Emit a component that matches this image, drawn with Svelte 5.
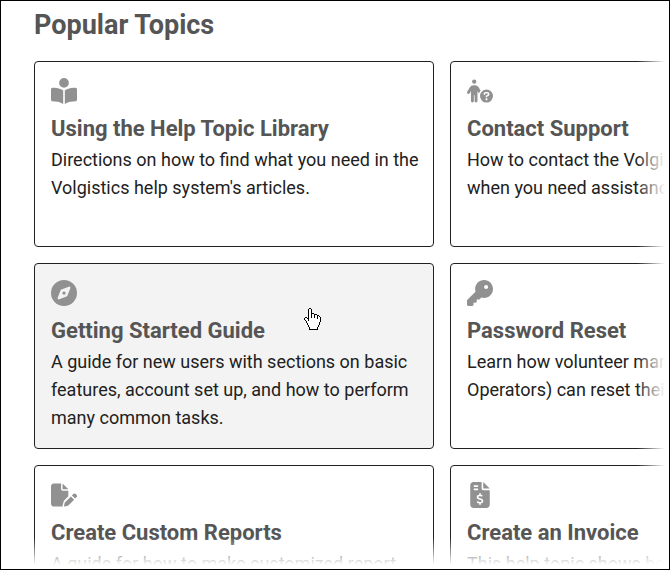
<script lang="ts">
	interface Topic {
		title: string;
		text: string;
		viewBox: string;
		icon: string;
		active?: boolean;
	}

	const topics: Topic[] = [
		{
			title: 'Using the Help Topic Library',
			text: "Directions on how to find what you need in the Volgistics help system's articles.",
			viewBox: '0 0 512 512',
			icon: 'M160 96a96 96 0 1 1 192 0A96 96 0 1 1 160 96zm80 152V512l-48.4-24.2c-20.9-10.4-43.5-17-66.8-19.3l-96-9.6C12.5 457.2 0 443.5 0 427V224c0-17.7 14.3-32 32-32H62.3c63.6 0 125.6 19.6 177.7 56zm32 264V248c52.1-36.4 114.1-56 177.7-56H480c17.7 0 32 14.3 32 32V427c0 16.4-12.5 30.2-28.8 31.8l-96 9.6c-23.2 2.3-45.9 8.9-66.8 19.3L272 512z'
		},
		{
			title: 'Contact Support',
			text: 'How to contact the Volgistics support team when you need assistance.',
			viewBox: '0 0 576 512',
			icon: 'M112 48a48 48 0 1 1 96 0 48 48 0 1 1 -96 0zm40 304V480c0 17.7-14.3 32-32 32s-32-14.3-32-32V256.9L59.4 304.5c-9.1 15.1-28.8 20-43.9 10.9s-20-28.8-10.9-43.9l58.3-97c17.4-28.9 48.6-46.6 82.3-46.6h29.7c33.7 0 64.9 17.7 82.3 46.6l44.9 74.7c-16.1 17.6-28.6 38.5-36.6 61.5c-1.9-1.8-3.5-3.9-4.9-6.3L232 256.9V480c0 17.7-14.3 32-32 32s-32-14.3-32-32V352H152zM432 224a144 144 0 1 1 0 288 144 144 0 1 1 0-288zm0 240a24 24 0 1 0 0-48 24 24 0 1 0 0 48zM368 321.6V328c0 8.8 7.2 16 16 16s16-7.2 16-16v-6.4c0-5.3 4.3-9.6 9.6-9.6h40.5c7.7 0 13.9 6.2 13.9 13.9c0 5.2-2.9 9.9-7.4 12.3l-32 16.8c-5.3 2.8-8.6 8.2-8.6 14.2V384c0 8.8 7.2 16 16 16s16-7.2 16-16v-5.1l23.5-12.3c15.1-7.9 24.5-23.6 24.5-40.6c0-25.4-20.6-45.9-45.9-45.9H409.6c-23 0-41.6 18.6-41.6 41.6z'
		},
		{
			title: 'Getting Started Guide',
			text: 'A guide for new users with sections on basic features, account set up, and how to perform many common tasks.',
			viewBox: '0 0 512 512',
			icon: 'M256 512A256 256 0 1 0 256 0a256 256 0 1 0 0 512zm50.7-186.9L162.4 380.6c-19.4 7.5-38.5-11.6-31-31l55.5-144.3c3.3-8.5 9.9-15.1 18.4-18.4l144.3-55.5c19.4-7.5 38.5 11.6 31 31L325.1 306.7c-3.2 8.5-9.9 15.1-18.4 18.4zM288 256a32 32 0 1 0 -64 0 32 32 0 1 0 64 0z',
			active: true
		},
		{
			title: 'Password Reset',
			text: 'Learn how volunteer managers (System Operators) can reset their password.',
			viewBox: '0 0 512 512',
			icon: 'M336 352c97.2 0 176-78.8 176-176S433.2 0 336 0S160 78.8 160 176c0 18.7 2.9 36.8 8.3 53.7L7 391c-4.5 4.5-7 10.6-7 17v80c0 13.3 10.7 24 24 24h80c13.3 0 24-10.7 24-24V448h40c13.3 0 24-10.7 24-24V384h40c6.4 0 12.5-2.5 17-7l33.3-33.3c16.9 5.4 35 8.3 53.7 8.3zM376 96a40 40 0 1 1 0 80 40 40 0 1 1 0-80z'
		},
		{
			title: 'Create Custom Reports',
			text: 'A guide for how to make customized report templates.',
			viewBox: '0 0 576 512',
			icon: 'M0 64C0 28.7 28.7 0 64 0H224V128c0 17.7 14.3 32 32 32H384V285.7l-86.8 86.8c-10.3 10.3-17.5 23.1-21 37.2l-18.7 74.9c-2.3 9.2-1.8 18.8 1.3 27.5H64c-35.3 0-64-28.7-64-64V64zm384 64H256V0L384 128zM549.8 235.7l14.4 14.4c15.6 15.6 15.6 40.9 0 56.6l-29.4 29.4-71-71 29.4-29.4c15.6-15.6 40.9-15.6 56.6 0zM311.9 417L441.1 287.8l71 71L382.9 487.9c-4.1 4.1-9.2 7-14.9 8.4l-60.1 15c-5.5 1.4-11.2-.2-15.2-4.2s-5.6-9.7-4.2-15.2l15-60.1c1.4-5.6 4.3-10.8 8.4-14.9z'
		},
		{
			title: 'Create an Invoice',
			text: 'This help topic shows how to create an invoice.',
			viewBox: '0 0 384 512',
			icon: 'M64 0C28.7 0 0 28.7 0 64V448c0 35.3 28.7 64 64 64H320c35.3 0 64-28.7 64-64V160H256c-17.7 0-32-14.3-32-32V0H64zM256 0V128H384L256 0zM64 80c0-8.8 7.2-16 16-16h64c8.8 0 16 7.2 16 16s-7.2 16-16 16H80c-8.8 0-16-7.2-16-16zm0 64c0-8.8 7.2-16 16-16h64c8.8 0 16 7.2 16 16s-7.2 16-16 16H80c-8.8 0-16-7.2-16-16zm128 72c8.8 0 16 7.2 16 16v17.3c8.5 1.2 16.7 3.1 24.1 5.1c8.5 2.3 13.6 11 11.3 19.6s-11 13.6-19.6 11.3c-11.1-3-22-5.2-32.1-5.3c-8.4-.1-17.4 1.8-23.6 5.5c-5.7 3.4-8.1 7.3-8.1 12.8c0 3.7 1.3 6.5 7.3 10.1c6.9 4.1 16.6 7.1 29.2 10.9l.5 .1c11.3 3.4 25.3 7.6 36.3 14.6c12.1 7.6 22.4 19.7 22.7 38.2c.3 19.3-9.6 33.3-22.9 41.6c-7.7 4.8-16.4 7.6-25.1 9.1V440c0 8.8-7.2 16-16 16s-16-7.2-16-16V422.2c-11.2-2.1-21.7-5.7-30.9-8.9c-2.1-.7-4.2-1.4-6.2-2.1c-8.4-2.8-12.9-11.9-10.1-20.2s11.9-12.9 20.2-10.1c2.5 .8 4.8 1.6 7.1 2.4c13.6 4.6 24.6 8.4 36.3 8.7c9.1 .3 17.9-1.7 23.7-5.3c5.1-3.2 7.9-7.3 7.8-14c-.1-4.6-1.8-7.8-7.7-11.6c-6.8-4.3-16.5-7.4-29-11.2l-1.6-.5c-11-3.3-24.3-7.3-34.8-13.7c-12-7.2-22.6-18.9-22.7-37.3c-.1-19.4 10.8-32.8 23.8-40.5c7.5-4.4 15.8-7.2 24.1-8.7V232c0-8.8 7.2-16 16-16z'
		}
	];
</script>

<main class="page">
	<h1>Popular Topics</h1>
	<div class="topics">
		{#each topics as topic}
			<a class="card" class:active={topic.active} href="#topic">
				<svg class="icon" viewBox={topic.viewBox} aria-hidden="true">
					<path d={topic.icon} />
				</svg>
				<h2>{topic.title}</h2>
				<p>{topic.text}</p>
				{#if topic.active}
					<svg class="pointer" viewBox="0 0 17 22" shape-rendering="crispEdges" aria-hidden="true">
						<path
							fill="#fff"
							d="M5 1h2v5h3v1h3v1h2v1h1v5h-1v3h-1v4H5v-3H4v-2H3v-3H2v-2H1v-2h2v1h2z"
						/>
						<path
							fill="#000"
							d="M5 0h2v1H5zM4 1h1v12H4zM7 1h1v9H7zM8 5h2v1H8zM10 6h1v4h-1zM11 6h2v1h-2zM13 7h1v4h-1zM14 7h1v1h-1zM15 8h1v1h-1zM16 9h1v5h-1zM1 9h2v1H1zM0 10h1v2H0zM3 10h1v1H3zM1 12h1v1H1zM2 13h1v2H2zM3 15h1v2H3zM4 17h1v2H4zM5 19h1v3H5zM15 14h1v3h-1zM14 17h1v2h-1zM13 19h1v3h-1zM5 21h9v1H5z"
						/>
					</svg>
				{/if}
			</a>
		{/each}
	</div>
</main>

<style>
	:global(body) {
		margin: 0;
		background: #fff;
	}

	.page {
		position: relative;
		box-sizing: border-box;
		height: 100vh;
		padding: 6px 0 0 33px;
		border: 1px solid #000;
		overflow: hidden;
		font-family: Roboto, 'Liberation Sans', sans-serif;
		color: #212121;
	}

	/* content fades out towards the right and bottom edges */
	.page::before,
	.page::after {
		content: '';
		position: absolute;
		right: 0;
		bottom: 0;
		z-index: 1;
		pointer-events: none;
	}

	.page::before {
		top: 0;
		width: 32px;
		background: linear-gradient(to right, rgba(255, 255, 255, 0), #fff 28px);
	}

	.page::after {
		left: 0;
		height: 32px;
		background: linear-gradient(to bottom, rgba(255, 255, 255, 0), #fff 28px);
	}

	h1 {
		margin: 0 0 18px;
		font-size: 27px;
		font-weight: 700;
		line-height: 36px;
		color: #555;
	}

	.topics {
		display: grid;
		grid-template-columns: repeat(2, minmax(400px, 1fr));
		grid-auto-rows: minmax(186px, auto);
		gap: 16px;
	}

	.card {
		position: relative;
		box-sizing: border-box;
		padding: 16px 12px 12px 16px;
		border: 1px solid #212121;
		border-radius: 4px;
		color: inherit;
		text-decoration: none;
	}

	.card.active,
	.card:hover {
		background: #f3f3f3;
	}

	.icon {
		display: block;
		width: 26px;
		height: 26px;
		fill: #919191;
	}

	h2 {
		margin: 8px 0 0;
		font-size: 22px;
		font-weight: 700;
		line-height: 34px;
		color: #555;
	}

	p {
		margin: 0;
		font-size: 18px;
		line-height: 28px;
	}

	.pointer {
		position: absolute;
		top: 44px;
		left: 269px;
		width: 17px;
		height: 22px;
	}
</style>
